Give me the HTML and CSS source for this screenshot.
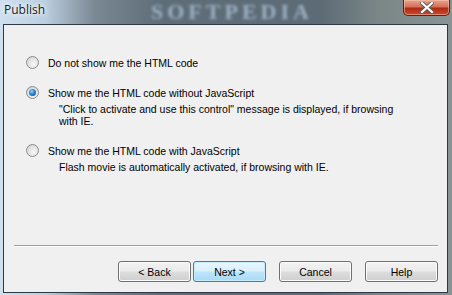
FILE: index.html
```html
<!DOCTYPE html>
<html lang="en">
<head>
  <meta charset="UTF-8">
  <title>Publish</title>
  <link rel="stylesheet" href="styles.css">
</head>
<body>
  <div class="window">
    <div class="titlebar">
      <span class="title">Publish</span>
      <span class="watermark">SOFTPEDIA</span>
      <button class="close" aria-label="Close">
        <svg width="14" height="11" viewBox="0 0 14 11">
          <path d="M2 1 L12 10 M12 1 L2 10" stroke="#5a5a5a" stroke-width="4" stroke-linecap="square"/>
          <path d="M2 1 L12 10 M12 1 L2 10" stroke="#ffffff" stroke-width="2.2" stroke-linecap="square"/>
        </svg>
      </button>
    </div>

    <div class="client">
      <div class="options">
        <label class="option">
          <span class="radio"></span>
          <span class="label">Do not show me the HTML code</span>
        </label>

        <label class="option">
          <span class="radio checked"></span>
          <span class="label">Show me the HTML code without JavaScript</span>
        </label>
        <p class="note">"Click to activate and use this control" message is displayed, if browsing with IE.</p>

        <label class="option">
          <span class="radio"></span>
          <span class="label">Show me the HTML code with JavaScript</span>
        </label>
        <p class="note">Flash movie is automatically activated, if browsing with IE.</p>
      </div>

      <div class="footer">
        <div class="separator"></div>
        <div class="buttons">
          <button class="btn">&lt; Back</button>
          <button class="btn default">Next &gt;</button>
          <button class="btn gap">Cancel</button>
          <button class="btn gap">Help</button>
        </div>
      </div>
    </div>
  </div>
</body>
</html>
```

FILE: styles.css
```css
body {
  margin: 0;
  width: 452px;
  height: 295px;
  overflow: hidden;
  font-family: "Liberation Sans", Arial, sans-serif;
  font-size: 10.5px;
  color: #000;
}
.window {
  height: 295px;
  box-sizing: border-box;
  padding: 0 4px 2px 3px;
  display: flex;
  flex-direction: column;
  background: linear-gradient(90deg, #cfe0ef 0px, #bccfe0 45px, #7a8893 95px, #5f6d78 160px, #5d6b76 320px, #7b8787 380px, #8a9494 452px);
}
.titlebar {
  height: 24px;
  position: relative;
  display: flex;
  align-items: flex-start;
  justify-content: space-between;
}
.title {
  font-family: "Open Sans", "Liberation Sans", sans-serif;
  font-size: 12px;
  color: #1a1a1a;
  line-height: 20px;
  padding-left: 1px;
  text-shadow: 0 0 6px #ffffff, 0 0 4px #ffffff;
  position: relative;
  z-index: 1;
}
.watermark {
  position: absolute;
  left: 148px;
  top: 0;
  font-family: "Liberation Serif", serif;
  font-weight: bold;
  font-size: 22px;
  line-height: 24px;
  letter-spacing: 4px;
  color: #9db1c4;
  filter: blur(1.4px);
}
.close {
  width: 47px;
  height: 16px;
  margin-right: -2px;
  border: 1px solid #4a2a24;
  border-top: none;
  border-radius: 0 0 5px 5px;
  background: linear-gradient(#e8a690 0%, #d4705a 45%, #b02a12 55%, #c84a30 100%);
  box-shadow: inset 0 0 0 1px rgba(255, 200, 180, 0.5);
  display: flex;
  align-items: center;
  justify-content: center;
  padding: 0;
  position: relative;
  z-index: 1;
}
.client {
  flex: 1;
  background: #f0f0f0;
  border: 1px solid #2d3a45;
  display: flex;
  flex-direction: column;
  justify-content: space-between;
}
.options {
  padding: 31px 0 0 22px;
}
.option {
  display: flex;
  align-items: center;
  height: 13px;
  margin-bottom: 17px;
}
.option + .note {
  margin-top: -13px;
}
.radio {
  width: 11px;
  height: 11px;
  border-radius: 50%;
  border: 1px solid #8b8b8b;
  background: radial-gradient(circle at 60% 65%, #f6f6f6 0%, #e4e4e4 50%, #c8c8c8 100%);
  margin-right: 9px;
  flex: none;
  position: relative;
}
.radio.checked::after {
  content: "";
  position: absolute;
  left: 2px;
  top: 2px;
  width: 7px;
  height: 7px;
  border-radius: 50%;
  background: radial-gradient(circle at 40% 35%, #8fd4ff 0%, #2a84d0 45%, #0b3f85 100%);
}
.note {
  margin: 0 0 17px 33px;
  line-height: 12px;
  width: 345px;
}
.footer {
  padding: 0 9px 10px 10px;
}
.separator {
  border-top: 1px solid #a0a0a0;
  border-bottom: 1px solid #ffffff;
  margin-bottom: 14px;
}
.buttons {
  display: flex;
  justify-content: flex-end;
  gap: 2px;
}
.btn {
  width: 73px;
  height: 21px;
  padding: 0;
  font-family: "Liberation Sans", Arial, sans-serif;
  font-size: 10.5px;
  color: #000;
  border: 1px solid #707070;
  border-radius: 3px;
  background: linear-gradient(#f2f2f2 0%, #ebebeb 48%, #dddddd 52%, #cfcfcf 100%);
  box-shadow: inset 0 0 0 1px #fcfcfc;
}
.btn.default {
  border-color: #3c7fb1;
  background: linear-gradient(#eaf6fd 0%, #d9f0fc 48%, #bee6fd 52%, #a7d9f5 100%);
  box-shadow: inset 0 0 0 1px #c8ecfa;
}
.btn.gap {
  margin-left: 11px;
}
```
